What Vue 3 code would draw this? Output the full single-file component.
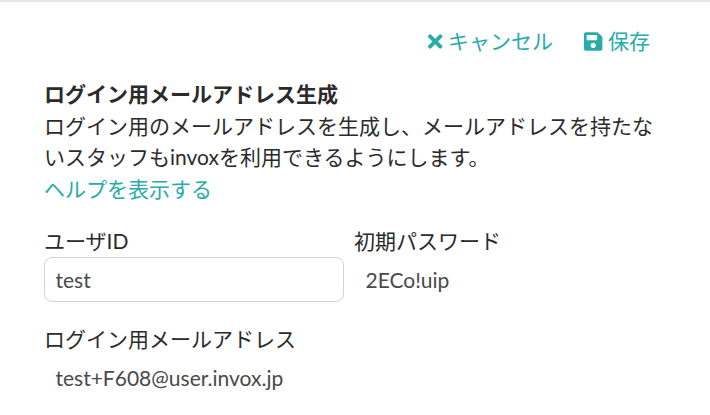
<template>
  <div class="page">
    <div class="actions">
      <a class="action cancel">
        <svg class="icon-x" viewBox="0 0 352 512"><path d="M242.72 256l100.07-100.07c12.28-12.28 12.28-32.19 0-44.48l-22.24-22.24c-12.28-12.28-32.19-12.28-44.48 0L176 189.28 75.93 89.21c-12.28-12.28-32.19-12.28-44.48 0L9.21 111.45c-12.28 12.28-12.28 32.19 0 44.48L109.28 256 9.21 356.07c-12.28 12.28-12.28 32.19 0 44.48l22.24 22.24c12.28 12.28 32.2 12.28 44.48 0L176 322.72l100.07 100.07c12.28 12.28 32.2 12.28 44.48 0l22.24-22.24c12.28-12.28 12.28-32.19 0-44.48L242.72 256z" /></svg>
        キャンセル
      </a>
      <a class="action save">
        <svg class="icon-save" viewBox="0 0 448 512"><path d="M433.941 129.941l-83.882-83.882A48 48 0 0 0 316.118 32H48C21.49 32 0 53.49 0 80v352c0 26.51 21.49 48 48 48h352c26.51 0 48-21.49 48-48V163.882a48 48 0 0 0-14.059-33.941zM224 416c-35.346 0-64-28.654-64-64 0-35.346 28.654-64 64-64s64 28.654 64 64c0 35.346-28.654 64-64 64zm96-304.52V212c0 6.627-5.373 12-12 12H76c-6.627 0-12-5.373-12-12V108c0-6.627 5.373-12 12-12h228.52c3.183 0 6.235 1.264 8.485 3.515l3.48 3.48A11.996 11.996 0 0 1 320 111.48z" /></svg>
        保存
      </a>
    </div>

    <div class="intro">
      <div class="title">ログイン用メールアドレス生成</div>
      <div class="desc">ログイン用のメールアドレスを生成し、メールアドレスを持たないスタッフもinvoxを利用できるようにします。</div>
      <a class="help">ヘルプを表示する</a>
    </div>

    <div class="fields">
      <div class="field">
        <label>ユーザID</label>
        <input class="text-input" type="text" value="test" />
      </div>
      <div class="field">
        <label>初期パスワード</label>
        <div class="static">2ECo!uip</div>
      </div>
    </div>

    <div class="mail">
      <label>ログイン用メールアドレス</label>
      <div class="static">test+F608@user.invox.jp</div>
    </div>
  </div>
</template>

<script setup>
</script>

<style>
html, body {
  margin: 0;
  background: #fff;
  overflow: hidden;
}
</style>

<style scoped>
.page {
  width: 710px;
  height: 415px;
  box-sizing: border-box;
  border-top: 2px solid #e6e6e6;
  padding: 0 44px;
  font-family: "Lato", "Noto Sans CJK JP", sans-serif;
  font-size: 21px;
  line-height: 31.5px;
  color: #2b2b2b;
  overflow: hidden;
}

.actions {
  display: flex;
  justify-content: flex-end;
  align-items: center;
  gap: 31px;
  padding: 23px 16px 0 0;
  height: 32px;
}

.action {
  display: flex;
  align-items: center;
  color: #26aca9;
  gap: 5.5px;
}

.icon-x {
  width: 14.4px;
  height: 21px;
  fill: #26aca9;
}

.icon-save {
  width: 18.4px;
  height: 21px;
  fill: #26aca9;
}

.intro {
  margin-top: 21px;
}

.title {
  font-weight: 700;
}

.desc {
  width: 622px;
}

.help {
  display: block;
  color: #26aca9;
}

.fields {
  display: flex;
  margin-top: 21px;
  gap: 10px;
}

.field {
  width: 300px;
}

label {
  display: block;
  height: 32px;
}

.text-input {
  display: block;
  width: 100%;
  height: 45px;
  box-sizing: border-box;
  border: 1px solid #d0d3da;
  border-radius: 8px;
  padding: 0 10.5px;
  font: inherit;
  color: #4a4a4a;
  outline: none;
}

.static {
  height: 45px;
  line-height: 45px;
  padding-left: 11.5px;
  color: #4a4a4a;
}

.mail {
  margin-top: 21px;
}
</style>
